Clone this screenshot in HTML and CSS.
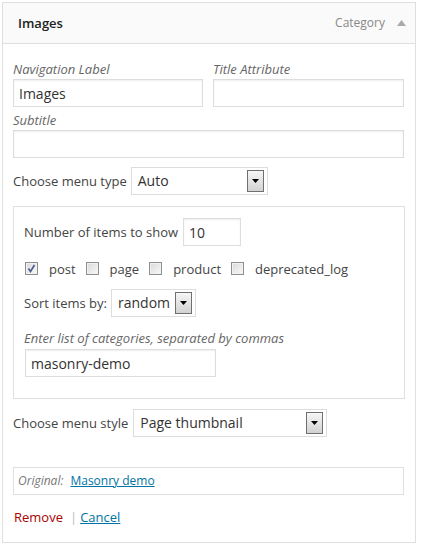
FILE: index.html
```html
<!DOCTYPE html>
<html lang="en">
<head>
<meta charset="utf-8">
<title>Menu item</title>
<link rel="stylesheet" href="styles.css">
</head>
<body>
<div class="menu-item">
  <div class="item-bar">
    <span class="item-title">Images</span>
    <span class="item-controls">
      <span class="item-type">Category</span>
      <svg class="item-toggle" width="9" height="6" viewBox="0 0 9 6"><polygon points="0,6 9,6 4.5,0" fill="#aaa"/></svg>
    </span>
  </div>
  <div class="item-settings">
    <div class="field-row">
      <label class="field">
        <span class="field-label">Navigation Label</span>
        <input class="text-input" type="text" value="Images">
      </label>
      <label class="field">
        <span class="field-label">Title Attribute</span>
        <input class="text-input" type="text" value="">
      </label>
    </div>
    <label class="field field-wide">
      <span class="field-label">Subtitle</span>
      <input class="text-input" type="text" value="">
    </label>

    <div class="select-row row-type">
      <span class="row-label">Choose menu type</span>
      <span class="select select-type"><span class="select-value">Auto</span><span class="select-btn"><svg width="7" height="4" viewBox="0 0 7 4"><polygon points="0,0 7,0 3.5,4" fill="#000"/></svg></span></span>
    </div>

    <div class="options-box">
      <div class="select-row">
        <span class="row-label">Number of items to show</span>
        <input class="text-input num-input" type="text" value="10">
      </div>
      <div class="check-row">
        <span class="check-item"><span class="cb checked"><svg width="11" height="11" viewBox="0 0 11 11"><polyline points="2.5,5.5 4.5,8.5 8.5,2" fill="none" stroke="#4b5d8f" stroke-width="1.6"/></svg></span><span class="cb-label">post</span></span>
        <span class="check-item"><span class="cb"></span><span class="cb-label">page</span></span>
        <span class="check-item"><span class="cb"></span><span class="cb-label">product</span></span>
        <span class="check-item"><span class="cb"></span><span class="cb-label">deprecated_log</span></span>
      </div>
      <div class="select-row row-sort">
        <span class="row-label">Sort items by:</span>
        <span class="select select-sort"><span class="select-value">random</span><span class="select-btn"><svg width="7" height="4" viewBox="0 0 7 4"><polygon points="0,0 7,0 3.5,4" fill="#000"/></svg></span></span>
      </div>
      <label class="field cat-field">
        <span class="field-label cat-label">Enter list of categories, separated by commas</span>
        <input class="text-input cat-input" type="text" value="masonry-demo">
      </label>
    </div>

    <div class="select-row row-style">
      <span class="row-label">Choose menu style</span>
      <span class="select select-style"><span class="select-value">Page thumbnail</span><span class="select-btn"><svg width="7" height="4" viewBox="0 0 7 4"><polygon points="0,0 7,0 3.5,4" fill="#000"/></svg></span></span>
    </div>

    <div class="original">
      <span class="original-label">Original:</span>
      <a class="original-link" href="#">Masonry demo</a>
    </div>

    <div class="actions">
      <a class="remove" href="#">Remove</a><span class="sep">|</span><a class="cancel" href="#">Cancel</a>
    </div>
  </div>
</div>
</body>
</html>
```
FILE: styles.css
```css
* { box-sizing: border-box; }

body {
  margin: 0;
  padding: 2px;
  background: #fff;
  font-family: "Open Sans", "Liberation Sans", sans-serif;
  font-size: 13px;
  line-height: 18px;
  color: #444;
}

.menu-item {
  width: 414px;
  border: 1px solid #dfdfdf;
  background: #fff;
}

.item-bar {
  height: 41px;
  display: flex;
  align-items: center;
  justify-content: space-between;
  padding: 0 9px 0 15px;
  background: #fafafa;
  border-bottom: 1px solid #dfdfdf;
}

.item-title {
  font-weight: 600;
  color: #222;
}

.item-controls {
  display: flex;
  align-items: center;
  gap: 12px;
}

.item-type {
  font-size: 12px;
  color: #888;
}

.item-toggle { display: block; }

.item-settings {
  padding: 16px 10px 16px 10px;
}

.field-row {
  display: grid;
  grid-template-columns: 190px 191px;
  column-gap: 10px;
  margin-bottom: 4px;
}

.field { display: block; }

.field-wide { width: 391px; }

.field-label {
  display: block;
  font-style: italic;
  color: #666;
  margin-bottom: 1px;
}

.text-input {
  display: block;
  width: 100%;
  height: 28px;
  margin: 0;
  border: 1px solid #ddd;
  border-radius: 0;
  box-shadow: inset 0 1px 2px rgba(0, 0, 0, 0.07);
  padding: 0 5px;
  font-family: "Open Sans", "Liberation Sans", sans-serif;
  font-size: 14px;
  color: #333;
  background: #fff;
  outline: none;
}

.select-row {
  display: flex;
  align-items: center;
  gap: 4px;
  height: 28px;
}

.row-type { margin-top: 9px; }
.row-style { margin-top: 10px; gap: 5px; }
.row-sort { margin-top: 10px; }

.row-label { color: #444; }

.select {
  display: flex;
  align-items: center;
  justify-content: space-between;
  height: 28px;
  border: 1px solid #ddd;
  padding: 0 3px 0 6px;
  font-size: 14px;
  color: #333;
  background: #fff;
}

.select-type { width: 137px; }
.select-sort { width: 85px; }
.select-style { width: 194px; }

.select-btn {
  width: 17px;
  height: 22px;
  border: 1px solid #707070;
  background: linear-gradient(#f6f6f6, #d2d2d2);
  display: flex;
  align-items: center;
  justify-content: center;
}

.select-btn svg { display: block; }

.options-box {
  margin-top: 11px;
  border: 1px solid #dfdfdf;
  padding: 11px 10px 21px 10px;
}

.num-input {
  width: 58px;
  margin-left: 1px;
}

.check-row {
  margin-top: 12px;
  height: 21px;
  display: flex;
  align-items: center;
}

.check-item {
  display: flex;
  align-items: center;
}

.cb {
  width: 13px;
  height: 13px;
  margin-left: 1px;
  margin-right: 11px;
  border: 1px solid #8e8f8f;
  background: linear-gradient(135deg, #d9d9d9, #f9f9f9);
  box-shadow: inset 0 0 0 1px #f1f1f1;
  display: flex;
  align-items: center;
  justify-content: center;
}

.cb svg { display: block; }

.cb-label {
  margin-right: 9px;
  color: #444;
}

.cat-field { margin-top: 12px; }

.cat-label { margin-bottom: 2px; }

.cat-input {
  width: 191px;
  margin-left: 1px;
}

.original {
  margin-top: 30px;
  width: 391px;
  height: 28px;
  border: 1px solid #dfdfdf;
  padding: 0 4px;
  display: flex;
  align-items: center;
  gap: 7px;
  font-size: 12px;
}

.original-label {
  font-style: italic;
  color: #777;
}

.original-link {
  color: #0074a2;
  text-decoration: underline;
}

.actions {
  margin-top: 13px;
  display: flex;
  align-items: center;
}

.remove {
  color: #a00;
  text-decoration: none;
  margin-left: 1px;
}

.sep {
  color: #bbb;
  margin: 0 2px 0 7px;
}

.cancel {
  color: #0074a2;
  text-decoration: underline;
  padding-left: 1px;
}
```
